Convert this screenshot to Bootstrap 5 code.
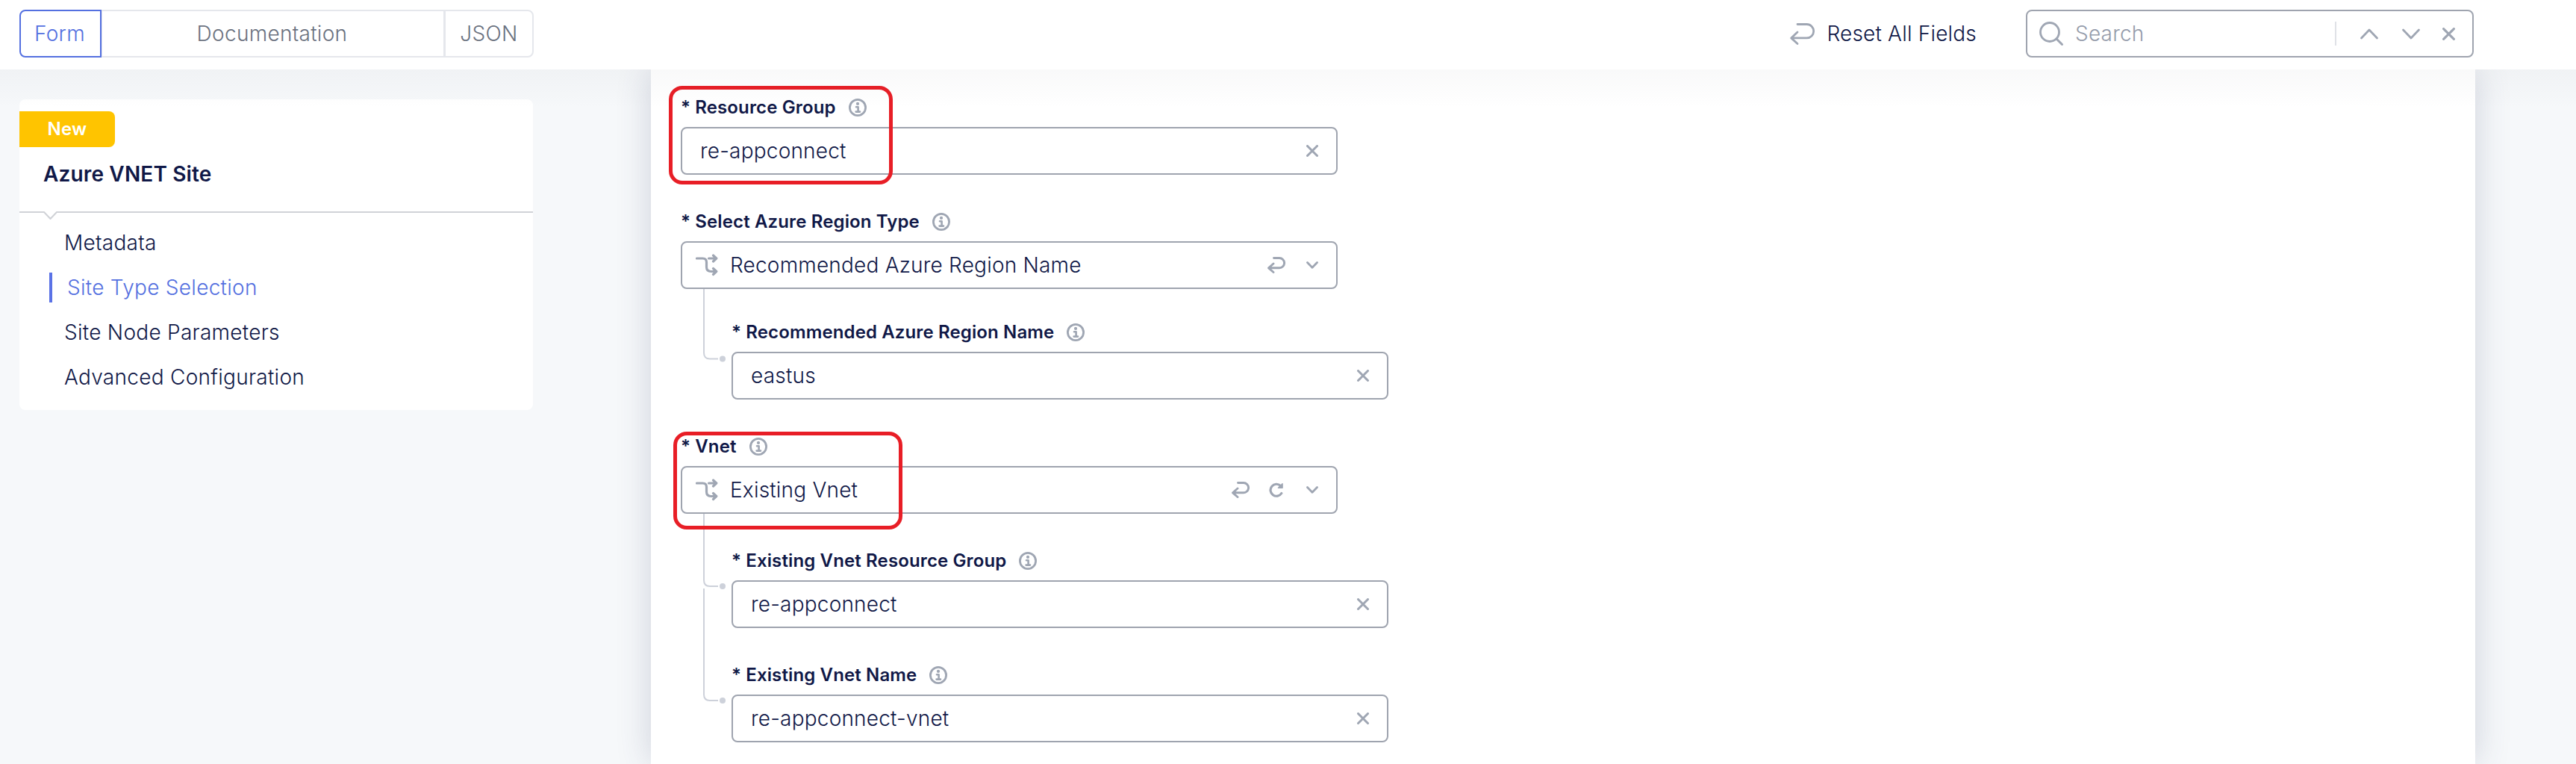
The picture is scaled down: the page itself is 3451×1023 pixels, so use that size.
<!DOCTYPE html>
<html lang="en">
<head>
<meta charset="utf-8">
<meta name="viewport" content="width=device-width, initial-scale=1">
<title>Azure VNET Site</title>
<link href="https://cdn.jsdelivr.net/npm/bootstrap@5.3.0/dist/css/bootstrap.min.css" rel="stylesheet">
<style>
:root{--ink:#101847;--blue:#5470e0;--grey:#9fa6b3;--rule:#9fa4af;--soft:#cdd1da}
body{font-family:Inter,"Liberation Sans",sans-serif;font-size:28px;font-weight:300;letter-spacing:.2px;line-height:32px;color:var(--ink);background:#f6f8fa;height:1023px;overflow:hidden}
svg{display:block;flex:none;fill:none;stroke:var(--grey);stroke-linecap:round;stroke-linejoin:round;overflow:visible}
.topbar{height:93px;padding:13px 137px 0 26px;position:relative;z-index:2}
.topbar::after{content:"";position:absolute;left:0;right:0;top:93px;height:52px;background:linear-gradient(rgba(60,65,80,.03),rgba(60,65,80,0))}
.modes{width:688px;height:64px}
.modes .btn{--bs-btn-color:#6b727f;--bs-btn-border-color:#e5e7ec;--bs-btn-border-width:2px;--bs-btn-border-radius:8px;--bs-btn-font-size:28px;--bs-btn-font-weight:300;--bs-btn-line-height:32px;--bs-btn-padding-x:0;--bs-btn-padding-y:14px;--bs-btn-active-bg:#fff;--bs-btn-active-color:var(--blue);--bs-btn-active-border-color:var(--blue);flex:none;letter-spacing:.3px}
.modes .m-form{width:110px}.modes .m-doc{width:461px;padding-right:2px}.modes .m-json{width:120px}
.modes .m-form{padding-right:2px}
.resetall{gap:16px;margin-right:66px;height:64px}
.resetall span{letter-spacing:.2px}
.finder{width:600px;height:64px;border:2px solid var(--rule);border-radius:8px;padding:0 23px 0 16px}
.finder .hint{color:#959cab;margin-left:16px}
.finder .bar{width:2px;height:32px;background:#dfe1e7}
.g-wide{margin-left:32px}
.side{width:688px;margin:40px 0 0 26px;height:416px;border:0;border-radius:8px;overflow:hidden}
.flag{width:128px;height:48px;margin-top:16px;background:#ffc400;border-radius:0 8px 8px 0;font-size:24px;font-weight:600;color:#fff;padding:0}
.side-title{font-weight:600;padding:20px 0 0 32px;height:86px;letter-spacing:.15px}
.toc{padding:10px 0 0 40px}
.toc .nav-link{color:var(--ink);padding:0 0 0 20px;height:40px;margin-bottom:20px;line-height:40px;letter-spacing:.28px}
.toc .nav-link.active{color:var(--blue);border-left:4px solid #5a72e6}
.panel{width:2444px;margin-left:158px;height:930px;padding:37px 0 0 40px;box-shadow:0 0 44px rgba(50,60,100,.2)}
.field{width:880px;position:relative;margin-bottom:49px}
.field-label{height:28px;margin-bottom:12px;font-size:24px;line-height:28px;font-weight:600;letter-spacing:.13px;gap:17px}
.box{height:64px;border:2px solid var(--rule);border-radius:8px;padding:0 24px}
.box.choice{padding-left:18px}
.box.choice span{margin-left:16px}
.kids{margin-left:68px}
.kids.first{margin-top:-5px}
.branch{position:absolute;left:-38px;stroke:var(--soft);stroke-width:2;stroke-linecap:butt}
.branch circle{fill:var(--soft);stroke:none}
.b1{top:-44px}.b2{top:-49px}.b3{top:-102px}
.callout{position:absolute;border:5px solid #e81e26;border-radius:18px;z-index:1}
.c1{left:-16px;top:-15px;width:300px;height:132px}
.c2{left:-10px;top:-6px;width:307px;height:131px}
.g-undo{margin-left:28px}.g-redo{margin-left:26px}.g-down{margin-left:30px}
</style>
</head>
<body>
<svg width="0" height="0" class="position-absolute">
<symbol id="info" viewBox="0 0 24 24"><circle cx="12" cy="12" r="10.600" stroke-width="2.800"/><circle cx="12" cy="6.900" r="2.100" fill="#9fa6b3" stroke="none"/><path d="M10 11.200h2.600v6M9.600 17.600h5.400" stroke-width="2.600"/></symbol>
<symbol id="x" viewBox="0 0 16 16"><path d="M1.500 1.500l13 13M14.500 1.500l-13 13" stroke-width="3"/></symbol>
<symbol id="down" viewBox="0 0 16 10"><path d="M1.500 1.500L8 8.200l6.500-6.700" stroke-width="2.800"/></symbol>
<symbol id="undo" viewBox="0 0 24 22"><path d="M8.500 1.500h7.500a6.600 6.600 0 0 1 0 13.200H2M8 9L1.500 14.800 8 20.500" stroke-width="2.900"/></symbol>
<symbol id="redo" viewBox="0 0 20 20"><path d="M16.800 14.500A8 8 0 1 1 15.500 4.400" stroke-width="3.200"/><path d="M18 1.800v5.500h-5.500z" fill="#9fa6b3" stroke-width="1.600"/></symbol>
<symbol id="split" viewBox="0 0 30 30"><path d="M1.500 6h8q5 0 5 5v6.500q0 6 6 6h6.500M17.500 6h9M23.500 2l4.300 4-4.300 4M23.500 19.500l4.300 4-4.300 4" stroke-width="3.200"/></symbol>
</svg>

<header class="topbar bg-white d-flex">
  <div class="btn-group modes" role="group">
    <button class="btn m-form active">Form</button>
    <button class="btn m-doc">Documentation</button>
    <button class="btn m-json">JSON</button>
  </div>
  <div class="resetall d-flex align-items-center ms-auto">
    <svg width="33" height="29" viewBox="0 0 33 29"><path d="M10 1.500h12.500a9.200 9.200 0 0 1 0 18.400H2M10 12L1.600 19.900 10 27.500" stroke-width="2.800"/></svg><span>Reset All Fields</span>
  </div>
  <div class="finder d-flex align-items-center">
    <svg width="32" height="32"><circle cx="14" cy="14" r="12.500" stroke-width="2.800"/><path d="M23 23l7.500 7.500" stroke-width="3"/></svg>
    <span class="hint me-auto">Search</span>
    <span class="bar"></span>
    <svg class="g-wide" width="24" height="15"><path d="M1.500 13L12 2l10.500 11" stroke-width="2.800"/></svg>
    <svg class="g-wide" width="24" height="15"><path d="M1.500 2L12 13 22.500 2" stroke-width="2.800"/></svg>
    <svg class="g-down" width="17" height="17"><use href="#x"/></svg>
  </div>
</header>

<div class="d-flex align-items-start">
  <aside class="card side">
    <div class="badge flag d-flex align-items-center justify-content-center">New</div>
    <div class="side-title">Azure VNET Site</div>
    <svg width="688" height="12"><path d="M0 1h33l8.500 9L50 1h638" stroke="#d0d2d7" stroke-width="2" stroke-linecap="butt"/></svg>
    <nav class="nav flex-column flex-nowrap toc">
      <a class="nav-link">Metadata</a>
      <a class="nav-link active">Site Type Selection</a>
      <a class="nav-link">Site Node Parameters</a>
      <a class="nav-link">Advanced Configuration</a>
    </nav>
  </aside>

  <main class="panel bg-white">
    <div class="field">
      <div class="callout c1"></div>
      <div class="field-label d-flex align-items-center"><span>* Resource Group</span><svg width="24" height="24"><use href="#info"/></svg></div>
      <div class="box d-flex align-items-center justify-content-between"><span>re-appconnect</span><svg width="16" height="16"><use href="#x"/></svg></div>
    </div>
    <div class="field">
      <div class="field-label d-flex align-items-center"><span>* Select Azure Region Type</span><svg width="24" height="24"><use href="#info"/></svg></div>
      <div class="box choice d-flex align-items-center"><svg width="30" height="30"><use href="#split"/></svg><span class="me-auto">Recommended Azure Region Name</span><svg width="24" height="22"><use href="#undo"/></svg><svg width="16" height="10" class="g-undo"><use href="#down"/></svg></div>
    </div>
    <div class="kids first">
      <div class="field">
        <svg class="branch b1" width="32" height="100"><path d="M1 0v85.500q0 8 8 8h11"/><circle cx="26" cy="93.500" r="4"/></svg>
        <div class="field-label d-flex align-items-center"><span>* Recommended Azure Region Name</span><svg width="24" height="24"><use href="#info"/></svg></div>
        <div class="box d-flex align-items-center justify-content-between"><span>eastus</span><svg width="16" height="16"><use href="#x"/></svg></div>
      </div>
    </div>
    <div class="field">
      <div class="callout c2"></div>
      <div class="field-label d-flex align-items-center"><span>* Vnet</span><svg width="24" height="24"><use href="#info"/></svg></div>
      <div class="box choice d-flex align-items-center"><svg width="30" height="30"><use href="#split"/></svg><span class="me-auto">Existing Vnet</span><svg width="24" height="22"><use href="#undo"/></svg><svg width="20" height="20" class="g-redo"><use href="#redo"/></svg><svg width="16" height="10" class="g-down"><use href="#down"/></svg></div>
    </div>
    <div class="kids">
      <div class="field">
        <svg class="branch b2" width="32" height="100"><path d="M1 0v89q0 8 8 8h11"/><circle cx="26" cy="97" r="4"/></svg>
        <div class="field-label d-flex align-items-center"><span>* Existing Vnet Resource Group</span><svg width="24" height="24"><use href="#info"/></svg></div>
        <div class="box d-flex align-items-center justify-content-between"><span>re-appconnect</span><svg width="16" height="16"><use href="#x"/></svg></div>
      </div>
      <div class="field">
        <svg class="branch b3" width="32" height="156"><path d="M1 0v142q0 8 8 8h11"/><circle cx="26" cy="150" r="4"/></svg>
        <div class="field-label d-flex align-items-center"><span>* Existing Vnet Name</span><svg width="24" height="24"><use href="#info"/></svg></div>
        <div class="box d-flex align-items-center justify-content-between"><span>re-appconnect-vnet</span><svg width="16" height="16"><use href="#x"/></svg></div>
      </div>
    </div>
  </main>
</div>
<script src="https://cdn.jsdelivr.net/npm/bootstrap@5.3.0/dist/js/bootstrap.bundle.min.js"></script>
</body>
</html>
